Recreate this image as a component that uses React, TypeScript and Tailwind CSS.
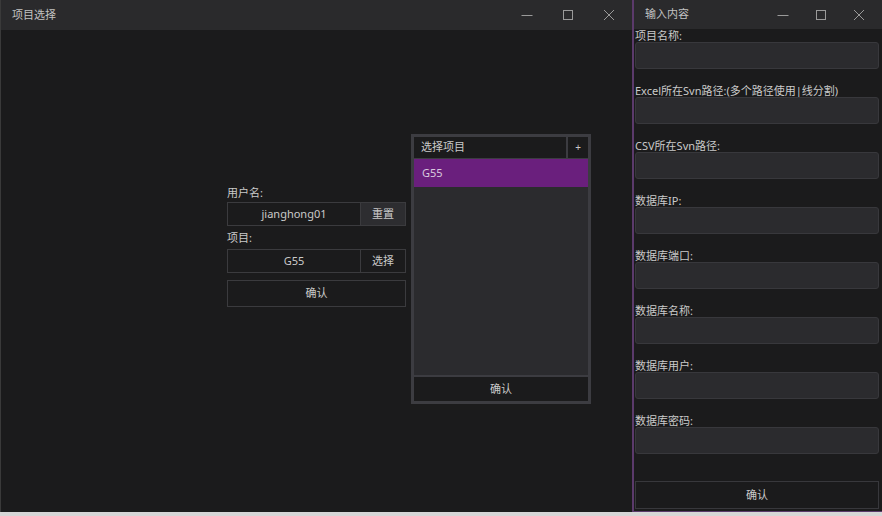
import React from "react";

const font = { fontFamily: '"Noto Sans", "Noto Sans CJK SC", sans-serif' };

function Controls({ gap }: { gap: string }) {
  return (
    <div className={`flex items-center ${gap} text-[#9a9a9a]`}>
      <svg width="12" height="12" viewBox="0 0 12 12"><line x1="0.5" y1="6.5" x2="11.5" y2="6.5" stroke="currentColor" strokeWidth="1" /></svg>
      <svg width="12" height="12" viewBox="0 0 12 12"><rect x="1.5" y="1.5" width="9" height="9" fill="none" stroke="currentColor" strokeWidth="1" /></svg>
      <svg width="12" height="12" viewBox="0 0 12 12"><path d="M1 1 L11 11 M11 1 L1 11" stroke="currentColor" strokeWidth="1" /></svg>
    </div>
  );
}

const fields = [
  "项目名称:",
  "Excel所在Svn路径:(多个路径使用|线分割)",
  "CSV所在Svn路径:",
  "数据库IP:",
  "数据库端口:",
  "数据库名称:",
  "数据库用户:",
  "数据库密码:",
];

export default function App() {
  return (
    <div className="w-[882px] h-[516px] bg-[#d6d6d6] flex items-start overflow-hidden text-[#cacaca] text-[11px]" style={font}>
      {/* Left window */}
      <div className="w-[632px] h-[512px] flex flex-col bg-[#1b1b1c] border-l border-[#3a3a3a]">
        <div className="h-[30px] shrink-0 bg-[#2a2a2c] flex items-center justify-between pl-[11px] pr-[17px]">
          <span className="text-[11px] text-[#c2c2c2]">项目选择</span>
          <Controls gap="gap-[29px]" />
        </div>
        <div className="flex-1 flex items-start pl-[226px]">
          <div className="w-[179px] mt-[153px] flex flex-col">
            <div className="h-[19px] leading-[19px]">用户名:</div>
            <div className="flex h-[24px]">
              <div className="w-[134px] border border-[#3b3b3e] bg-[#1b1b1c] flex items-center justify-center">jianghong01</div>
              <div className="flex-1 border border-[#3b3b3e] border-l-0 bg-[#2d2d30] flex items-center justify-center">重置</div>
            </div>
            <div className="h-[23px] leading-[23px]">项目:</div>
            <div className="flex h-[24px]">
              <div className="w-[134px] border border-[#3b3b3e] bg-[#1b1b1c] flex items-center justify-center">G55</div>
              <div className="flex-1 border border-[#3b3b3e] border-l-0 bg-[#1b1b1c] flex items-center justify-center">选择</div>
            </div>
            <div className="mt-[7px] h-[27px] border border-[#3b3b3e] flex items-center justify-center">确认</div>
          </div>
          <div className="ml-[5px] mt-[104px] w-[180px] h-[270px] border-[3px] border-[#3c3c41] flex flex-col bg-[#2b2b2e]">
            <div className="h-[22px] flex bg-[#1b1b1c] border-b border-[#3c3c41]">
              <div className="flex-1 flex items-center pl-[7px]">选择项目</div>
              <div className="w-[22px] border-l-2 border-[#3c3c41] flex items-center justify-center text-[10px]">+</div>
            </div>
            <div className="h-[28px] bg-[#6a1f7d] flex items-center pl-[8px] text-[#d9c8df]">G55</div>
            <div className="flex-1" />
            <div className="h-[26px] bg-[#1b1b1c] border-t-2 border-[#3c3c41] flex items-center justify-center">确认</div>
          </div>
        </div>
      </div>
      {/* Right window */}
      <div className="w-[250px] h-[512px] flex flex-col bg-[#1b1b1c] border-l-2 border-b border-[#5b3a6b]">
        <div className="h-[29px] shrink-0 bg-[#2a2a2c] flex items-center justify-between pl-[11px] pr-[17px]">
          <span className="text-[11px] text-[#c2c2c2]">输入内容</span>
          <Controls gap="gap-[26px]" />
        </div>
        <div className="flex-1 flex flex-col pl-[1px] pr-[3px]">
          {fields.map((f) => (
            <div key={f} className="flex flex-col mb-[15px]">
              <div className="h-[13px] leading-[13px] whitespace-nowrap">{f}</div>
              <div className="h-[27px] rounded-[3px] bg-[#2b2b2e] border border-[#38383c]" />
            </div>
          ))}
          <div className="flex-1" />
          <div className="h-[28px] mb-[2px] border border-[#38383c] bg-[#1b1b1c] flex items-center justify-center">确认</div>
        </div>
      </div>
    </div>
  );
}
